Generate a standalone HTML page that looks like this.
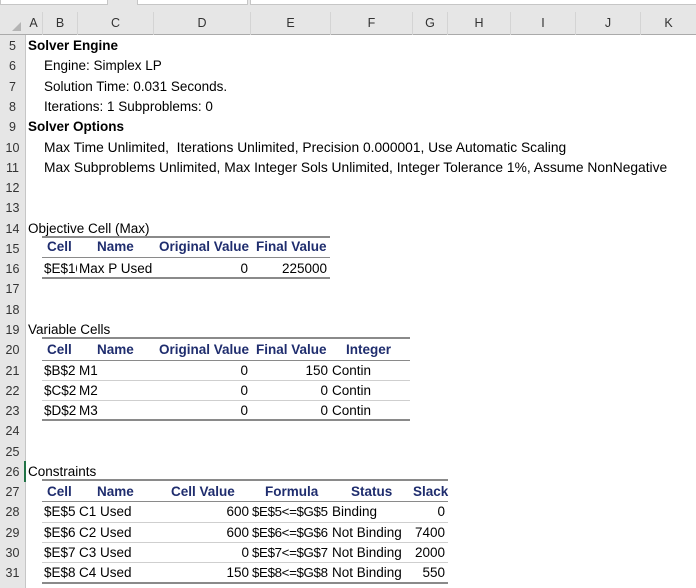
<!DOCTYPE html>
<html><head><meta charset="utf-8"><style>
body{margin:0;width:696px;height:588px;overflow:hidden;background:#fff;font-family:"Liberation Sans",Arial,sans-serif;position:relative;color:#000}
.t{position:absolute;line-height:20px;white-space:nowrap;font-size:13.5px}
.b{font-weight:bold}
.h{font-weight:bold;color:#1f2d6e}
.r{text-align:right}
.f{letter-spacing:-0.35px;font-size:13.3px}
.rn{position:absolute;left:0;width:25px;text-align:center;line-height:20px;font-size:12.5px;color:#333}
.ln{position:absolute;height:0}
.hd{position:absolute;top:12px;height:23px;line-height:23px;font-size:12.5px;color:#333;text-align:center;border-right:1px solid #d4d4d4}
</style></head><body>
<div style="position:absolute;left:0;top:0;width:696px;height:35px;background:#e6e6e6"></div>
<div style="position:absolute;left:0;top:0;width:106px;height:4px;background:#fff;border:1px solid #c6c6c6;border-top:none"></div>
<div style="position:absolute;left:137px;top:0;width:109px;height:4px;background:#fff;border:1px solid #c6c6c6;border-top:none"></div>
<div style="position:absolute;left:250px;top:0;width:446px;height:4px;background:#fff;border:1px solid #c6c6c6;border-top:none"></div>
<div style="position:absolute;left:0;top:35px;width:25px;height:553px;background:#e6e6e6;border-right:1px solid #c6c6c6"></div>
<div style="position:absolute;left:0;top:34px;width:696px;height:1px;background:#aaa"></div>
<div style="position:absolute;left:12px;top:22px;width:0;height:0;border-left:9px solid transparent;border-bottom:9px solid #b4b4b4"></div>
<div class="hd" style="left:25px;width:17px">A</div>
<div class="hd" style="left:43px;width:34px">B</div>
<div class="hd" style="left:78px;width:75px">C</div>
<div class="hd" style="left:154px;width:96px">D</div>
<div class="hd" style="left:251px;width:79px">E</div>
<div class="hd" style="left:331px;width:81px">F</div>
<div class="hd" style="left:413px;width:34px">G</div>
<div class="hd" style="left:448px;width:62px">H</div>
<div class="hd" style="left:511px;width:64px">I</div>
<div class="hd" style="left:576px;width:64px">J</div>
<div class="hd" style="left:641px;width:55px;border-right:none">K</div>
<div style="position:absolute;left:24px;top:461px;width:2px;height:21px;background:#217346"></div>

<div class="rn" style="top:36px">5</div><div class="rn" style="top:56px">6</div><div class="rn" style="top:76.5px">7</div><div class="rn" style="top:97px">8</div><div class="rn" style="top:117px">9</div><div class="rn" style="top:137.5px">10</div><div class="rn" style="top:157.5px">11</div><div class="rn" style="top:178px">12</div><div class="rn" style="top:198px">13</div><div class="rn" style="top:218.5px">14</div><div class="rn" style="top:238.5px">15</div><div class="rn" style="top:259px">16</div><div class="rn" style="top:279px">17</div><div class="rn" style="top:299.5px">18</div><div class="rn" style="top:320px">19</div><div class="rn" style="top:340px">20</div><div class="rn" style="top:360.5px">21</div><div class="rn" style="top:380.5px">22</div><div class="rn" style="top:401px">23</div><div class="rn" style="top:421px">24</div><div class="rn" style="top:441.5px">25</div><div class="rn" style="top:461.5px">26</div><div class="rn" style="top:482px">27</div><div class="rn" style="top:502px">28</div><div class="rn" style="top:522.5px">29</div><div class="rn" style="top:543px">30</div><div class="rn" style="top:563px">31</div>

<div class="t b" style="left:28px;top:36px">Solver Engine</div>
<div class="t" style="left:44px;top:56px">Engine: Simplex LP</div>
<div class="t" style="left:44px;top:76.5px">Solution Time: 0.031 Seconds.</div>
<div class="t" style="left:44px;top:97px">Iterations: 1 Subproblems: 0</div>
<div class="t b" style="left:28px;top:117px">Solver Options</div>
<div class="t" style="left:44px;top:137.5px;font-size:13.8px">Max Time Unlimited,&nbsp; Iterations Unlimited, Precision 0.000001, Use Automatic Scaling</div>
<div class="t" style="left:44px;top:157.5px;font-size:13.8px">Max Subproblems Unlimited, Max Integer Sols Unlimited, Integer Tolerance 1%, Assume NonNegative</div>

<div class="t" style="left:28px;top:218.5px">Objective Cell (Max)</div>
<div class="ln" style="left:42px;width:288px;top:236px;border-top:2px solid #8a8a8a"></div>
<div class="t h" style="left:47px;top:237px">Cell</div>
<div class="t h" style="left:97px;top:237px">Name</div>
<div class="t h" style="left:159px;top:237px">Original Value</div>
<div class="t h" style="left:256px;top:237px">Final Value</div>
<div class="ln" style="left:42px;width:288px;top:257px;border-top:1px solid #8a8a8a"></div>
<div class="t" style="left:44px;top:259px;width:33px;overflow:hidden">$E$10</div>
<div class="t" style="left:79px;top:259px">Max P Used</div>
<div class="t r" style="right:448px;top:259px">0</div>
<div class="t r" style="right:369px;top:259px">225000</div>
<div class="ln" style="left:42px;width:288px;top:277px;border-top:2px solid #8a8a8a"></div>

<div class="t" style="left:28px;top:320px">Variable Cells</div>
<div class="ln" style="left:42px;width:368px;top:337px;border-top:2px solid #8a8a8a"></div>
<div class="t h" style="left:47px;top:339.5px">Cell</div>
<div class="t h" style="left:97px;top:339.5px">Name</div>
<div class="t h" style="left:159px;top:339.5px">Original Value</div>
<div class="t h" style="left:256px;top:339.5px">Final Value</div>
<div class="t h" style="left:346px;top:339.5px">Integer</div>
<div class="ln" style="left:42px;width:368px;top:359.5px;border-top:1px solid #8a8a8a"></div>
<div class="t" style="left:44px;top:360.5px">$B$2</div><div class="t" style="left:79px;top:360.5px">M1</div><div class="t r" style="right:448px;top:360.5px">0</div><div class="t r" style="right:368px;top:360.5px">150</div><div class="t" style="left:332px;top:360.5px">Contin</div>
<div class="ln" style="left:42px;width:368px;top:380px;border-top:1px solid #cfcfcf"></div>
<div class="t" style="left:44px;top:380.5px">$C$2</div><div class="t" style="left:79px;top:380.5px">M2</div><div class="t r" style="right:448px;top:380.5px">0</div><div class="t r" style="right:368px;top:380.5px">0</div><div class="t" style="left:332px;top:380.5px">Contin</div>
<div class="ln" style="left:42px;width:368px;top:400px;border-top:1px solid #cfcfcf"></div>
<div class="t" style="left:44px;top:401px">$D$2</div><div class="t" style="left:79px;top:401px">M3</div><div class="t r" style="right:448px;top:401px">0</div><div class="t r" style="right:368px;top:401px">0</div><div class="t" style="left:332px;top:401px">Contin</div>
<div class="ln" style="left:42px;width:368px;top:419px;border-top:2px solid #8a8a8a"></div>

<div class="t" style="left:28px;top:461.5px">Constraints</div>
<div class="ln" style="left:42px;width:406px;top:479px;border-top:2px solid #8a8a8a"></div>
<div class="t h" style="left:47px;top:482px">Cell</div>
<div class="t h" style="left:97px;top:482px">Name</div>
<div class="t h" style="left:171px;top:482px">Cell Value</div>
<div class="t h" style="left:265px;top:482px">Formula</div>
<div class="t h" style="left:351px;top:482px">Status</div>
<div class="t h" style="left:413px;top:482px">Slack</div>
<div class="ln" style="left:42px;width:406px;top:501px;border-top:1px solid #8a8a8a"></div>
<div class="t" style="left:44px;top:502px">$E$5</div><div class="t" style="left:79px;top:502px">C1 Used</div><div class="t r" style="right:447px;top:502px">600</div><div class="t f" style="left:252px;top:502px">$E$5&lt;=$G$5</div><div class="t" style="left:332px;top:502px">Binding</div><div class="t r" style="right:251px;top:502px">0</div>
<div class="ln" style="left:42px;width:406px;top:522px;border-top:1px solid #cfcfcf"></div>
<div class="t" style="left:44px;top:522.5px">$E$6</div><div class="t" style="left:79px;top:522.5px">C2 Used</div><div class="t r" style="right:447px;top:522.5px">600</div><div class="t f" style="left:252px;top:522.5px">$E$6&lt;=$G$6</div><div class="t" style="left:332px;top:522.5px">Not Binding</div><div class="t r" style="right:251px;top:522.5px">7400</div>
<div class="ln" style="left:42px;width:406px;top:542px;border-top:1px solid #cfcfcf"></div>
<div class="t" style="left:44px;top:543px">$E$7</div><div class="t" style="left:79px;top:543px">C3 Used</div><div class="t r" style="right:447px;top:543px">0</div><div class="t f" style="left:252px;top:543px">$E$7&lt;=$G$7</div><div class="t" style="left:332px;top:543px">Not Binding</div><div class="t r" style="right:251px;top:543px">2000</div>
<div class="ln" style="left:42px;width:406px;top:562px;border-top:1px solid #cfcfcf"></div>
<div class="t" style="left:44px;top:563px">$E$8</div><div class="t" style="left:79px;top:563px">C4 Used</div><div class="t r" style="right:447px;top:563px">150</div><div class="t f" style="left:252px;top:563px">$E$8&lt;=$G$8</div><div class="t" style="left:332px;top:563px">Not Binding</div><div class="t r" style="right:251px;top:563px">550</div>
<div class="ln" style="left:42px;width:406px;top:582px;border-top:2px solid #8a8a8a"></div>
</body></html>
